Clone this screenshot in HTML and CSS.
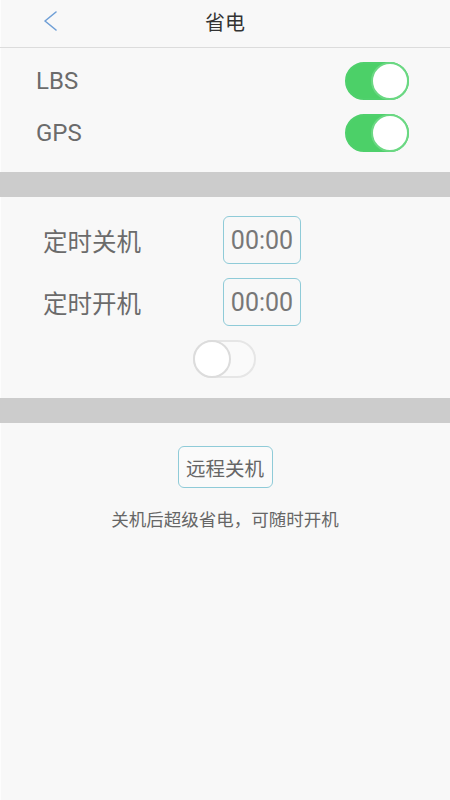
FILE: index.html
```html
<!DOCTYPE html>
<html lang="zh-CN">
<head>
    <meta charset="UTF-8">
    <meta name="viewport" content="width=device-width, initial-scale=1.0">
    <title>省电</title>
    <link rel="stylesheet" href="styles.css">
</head>
<body>
    <div class="page">
        <div class="header">
            <a class="back" href="#">
                <svg width="16" height="22" viewBox="0 0 16 22">
                    <polyline points="13,2 2,11 13,20" fill="none" stroke="#6f9fd6" stroke-width="1.6" stroke-linejoin="round" stroke-linecap="round"/>
                </svg>
            </a>
            <h1>省电</h1>
        </div>

        <div class="section locate">
            <div class="row">
                <span class="label">LBS</span>
                <span class="switch on"><span class="knob"></span></span>
            </div>
            <div class="row">
                <span class="label">GPS</span>
                <span class="switch on"><span class="knob"></span></span>
            </div>
        </div>

        <div class="band"></div>

        <div class="section timer">
            <div class="time-row">
                <span class="label">定时关机</span>
                <span class="time-box">00:00</span>
            </div>
            <div class="time-row">
                <span class="label">定时开机</span>
                <span class="time-box">00:00</span>
            </div>
            <div class="timer-switch">
                <span class="switch"><span class="knob"></span></span>
            </div>
        </div>

        <div class="band"></div>

        <div class="section remote">
            <button class="remote-button">远程关机</button>
            <p class="hint">关机后超级省电，可随时开机</p>
        </div>
    </div>
</body>
</html>
```

FILE: styles.css
```css
html, body {
    margin: 0;
    padding: 0;
    background-color: #f8f8f8;
}

body {
    font-family: Roboto, "Noto Sans CJK SC", sans-serif;
    color: #666;
}

.page {
    min-height: 800px;
    box-shadow: inset 1px 0 0 #fdfdfd;
}

.header {
    position: relative;
    height: 48px;
    box-sizing: border-box;
    padding-bottom: 5px;
    border-bottom: 1px solid #dcdcdc;
    display: flex;
    align-items: center;
    justify-content: center;
}

.header h1 {
    margin: 0;
    font-size: 20px;
    font-weight: normal;
    color: #333;
}

.back {
    position: absolute;
    left: 43px;
    top: 10px;
    display: block;
    height: 22px;
}

.section.locate {
    padding: 7px 41px 13px 36px;
}

.row {
    height: 52px;
    display: flex;
    align-items: center;
    justify-content: space-between;
}

.label {
    font-size: 24px;
    color: #6b6b6b;
}

.switch {
    position: relative;
    display: inline-block;
    width: 63px;
    height: 38px;
    border-radius: 19px;
    box-sizing: border-box;
    border: 2px solid #e6e6e6;
    background-color: #fafafa;
}

.switch .knob {
    position: absolute;
    top: -2px;
    left: -2px;
    width: 38px;
    height: 38px;
    border-radius: 50%;
    box-sizing: border-box;
    background-color: #fff;
    border: 2px solid #dcdcdc;
}

.switch.on {
    width: 64px;
    border-color: #4fd06c;
    background-color: #4cd068;
}

.switch.on .knob {
    left: auto;
    right: -2px;
    border-color: #6bd883;
}

.band {
    height: 25px;
    background-color: #cccccc;
}

.section.timer {
    padding: 19px 0 20px 43px;
}

.time-row {
    display: flex;
    align-items: center;
    margin-bottom: 14px;
}

.time-row .label {
    width: 180px;
    font-size: 24.5px;
}

.time-box {
    display: inline-block;
    width: 78px;
    height: 48px;
    line-height: 47px;
    box-sizing: border-box;
    border: 1.5px solid #8fcbd8;
    border-radius: 6px;
    text-align: center;
    font-size: 25px;
    color: #777;
}

.timer-switch {
    padding-left: 150px;
    margin-top: 1px;
    height: 38px;
}

.section.remote {
    padding-top: 23px;
    text-align: center;
}

.remote-button {
    font-family: "Noto Sans CJK SC", sans-serif;
    font-size: 19.5px;
    color: #666;
    background: #fafafa;
    border: 1.5px solid #8fcbd8;
    border-radius: 6px;
    width: 95px;
    height: 42px;
    padding: 0;
}

.hint {
    margin: 18px 0 0;
    font-family: "Noto Sans CJK SC", sans-serif;
    font-size: 17.5px;
    color: #666;
}
```
